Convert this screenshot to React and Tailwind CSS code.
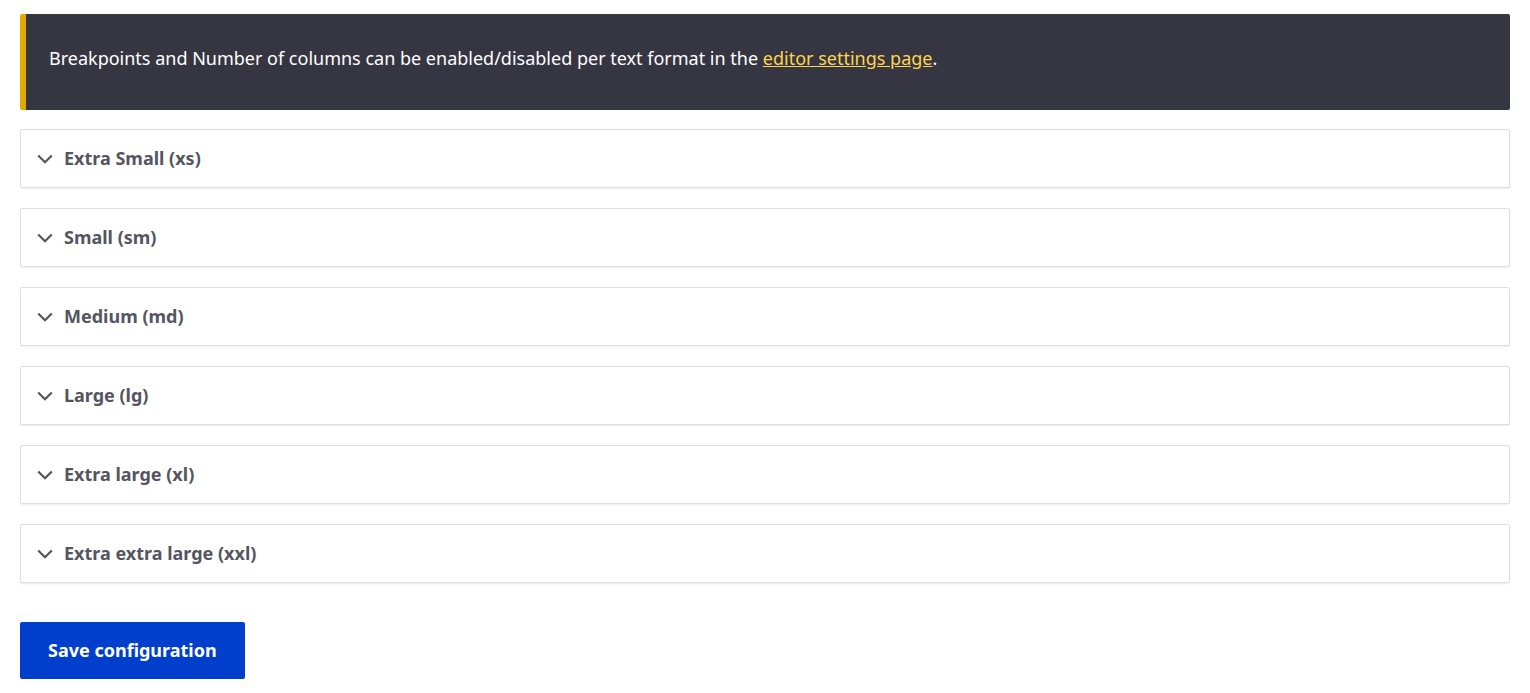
import React from 'react';

const breakpoints = [
  'Extra Small (xs)',
  'Small (sm)',
  'Medium (md)',
  'Large (lg)',
  'Extra large (xl)',
  'Extra extra large (xxl)',
];

const Chevron = () => (
  <svg width="16" height="10" viewBox="0 0 16 10" fill="none" className="shrink-0">
    <path d="M1.2 1.5 L8 8.3 L14.8 1.5" stroke="#55565b" strokeWidth="2.2" />
  </svg>
);

export default function App() {
  return (
    <div className="min-h-screen bg-white px-5 pt-[14px] font-['Noto_Sans',sans-serif]">
      {/* Message */}
      <div className="h-[96px] rounded-[2px] border-l-[6px] border-[#e0ac00] bg-[#353641] pl-[23px] pt-[32px] text-[18px] leading-[24px] text-white">
        <p>
          Breakpoints and Number of columns can be enabled/disabled per text format in the{' '}
          <a href="#" className="text-[#fdd44e] underline">editor settings page</a>.
        </p>
      </div>

      {/* Breakpoint details */}
      <div className="mt-[19px] flex flex-col gap-[20px]">
        {breakpoints.map((label) => (
          <div
            key={label}
            className="flex h-[59px] items-center gap-[11px] rounded-[2px] border border-[#dedfe4] bg-white pl-[16px] shadow-[0_1px_2px_rgba(0,0,0,0.08)]"
          >
            <Chevron />
            <span className="text-[18px] font-bold text-[#545560]">{label}</span>
          </div>
        ))}
      </div>

      {/* Actions */}
      <div className="mt-[39px]">
        <button className="h-[57px] rounded-[2px] bg-[#003ecc] px-[28px] text-[18px] font-bold text-white">
          Save configuration
        </button>
      </div>
    </div>
  );
}
